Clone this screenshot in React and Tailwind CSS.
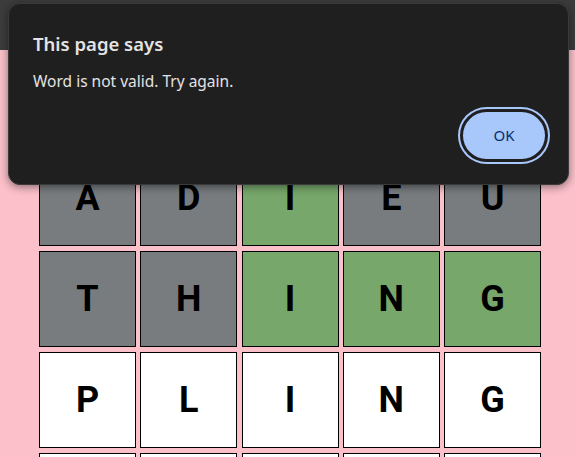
import React from "react";

const rows = [
  [["A", "g"], ["D", "g"], ["I", "G"], ["E", "g"], ["U", "g"]],
  [["T", "g"], ["H", "g"], ["I", "G"], ["N", "G"], ["G", "G"]],
  [["P", "w"], ["L", "w"], ["I", "w"], ["N", "w"], ["G", "w"]],
  [["", "w"], ["", "w"], ["", "w"], ["", "w"], ["", "w"]],
];

function Tile({ letter, kind }) {
  const bg =
    kind === "G" ? "bg-[#77a76b]" : kind === "g" ? "bg-[#787c7f]" : "bg-white";
  return (
    <div
      className={`${bg} border border-black h-[96px] flex items-center justify-center text-[36px] font-bold text-black`}
      style={{ fontFamily: "Roboto, 'Liberation Sans', sans-serif" }}
    >
      {letter}
    </div>
  );
}

export default function App() {
  return (
    <div className="relative w-[575px] h-[457px] overflow-hidden bg-[#fbc0ca]">
      <div className="h-[50px] bg-[#3c3c3c]" />
      <div className="pl-[39px] pt-[100px]">
        <div className="grid grid-cols-[repeat(5,97px)] gap-x-[4.25px] gap-y-[5px]">
          {rows.flat().map(([l, k], i) => (
            <Tile key={i} letter={l} kind={k} />
          ))}
        </div>
      </div>

      <div
        className="absolute left-[8px] top-[3px] w-[561px] h-[182px] rounded-[12px] bg-[#1f1f1f] border border-[#3a3a3a] shadow-[0_2px_8px_rgba(0,0,0,0.45)] flex flex-col"
        style={{ fontFamily: "'Noto Sans', 'Open Sans', sans-serif" }}
      >
        <div className="pl-[24px] pt-[28px] text-[18.5px] leading-[24px] font-semibold text-[#e3e3e3]">
          This page says
        </div>
        <div className="pl-[24px] pt-[15px] text-[15.5px] leading-[20px] text-[#e3e3e3]">
          Word is not valid. Try again.
        </div>
        <div className="flex-1 flex items-end justify-end pr-[23px] pb-[25px]">
          <button className="w-[82px] h-[47px] rounded-full bg-[#a8c7fa] text-[#062e6f] text-[15px] shadow-[0_0_0_3px_#1f1f1f,0_0_0_5px_#a8c7fa]">
            OK
          </button>
        </div>
      </div>
    </div>
  );
}
